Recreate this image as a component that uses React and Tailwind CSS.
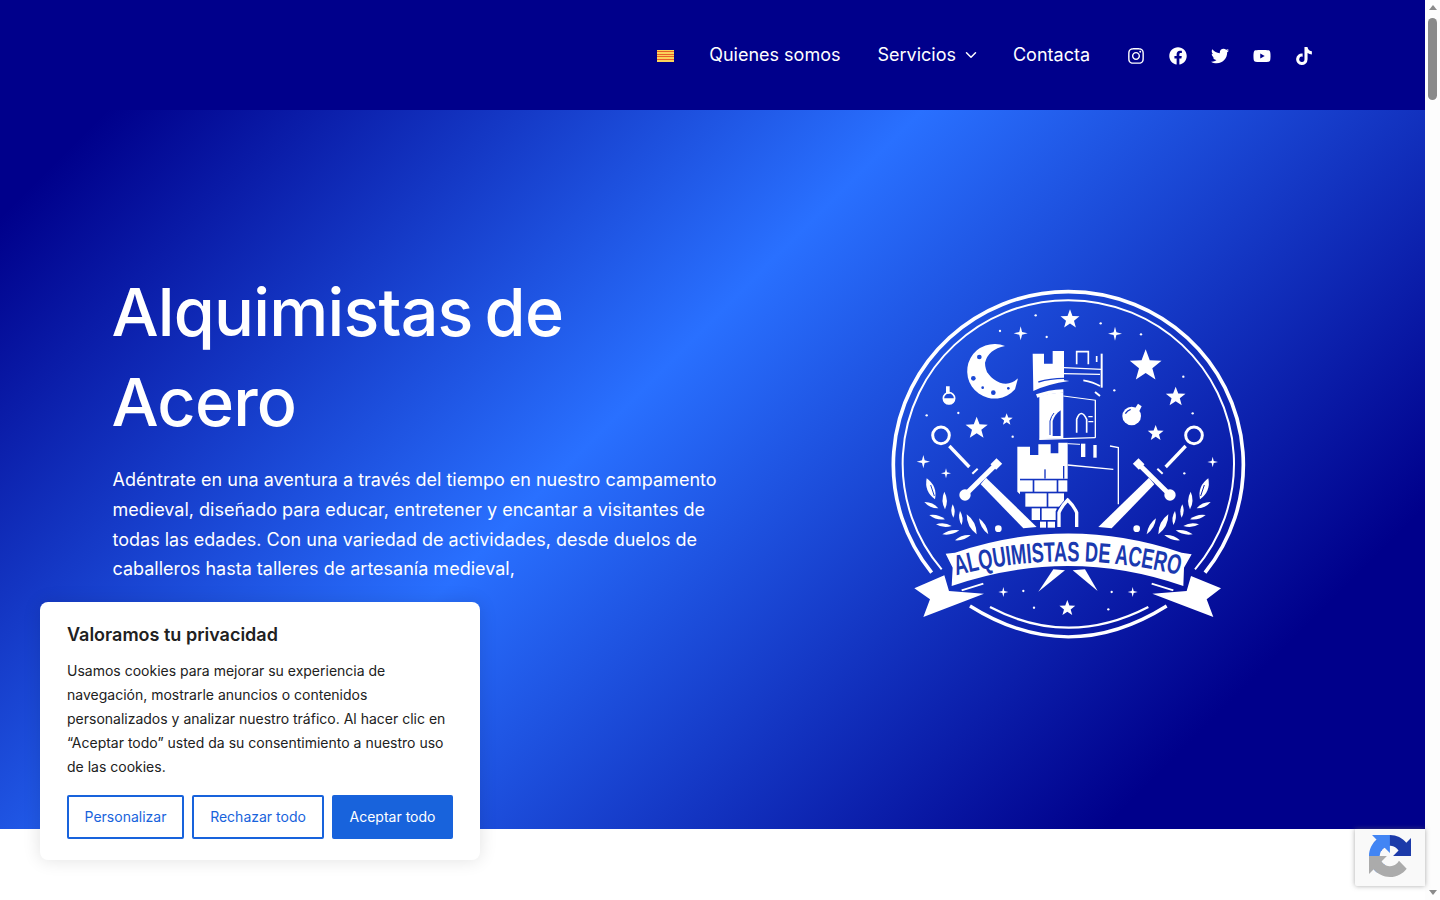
import React from 'react';
import { FaInstagram, FaFacebook, FaTwitter, FaYoutube, FaTiktok } from 'react-icons/fa';
import { FiChevronDown } from 'react-icons/fi';

// Star helpers for the crest
const starPoints = (cx, cy, r) => {
  const pts = [];
  for (let i = 0; i < 10; i++) {
    const rad = i % 2 === 0 ? r : r * 0.42;
    const a = -Math.PI / 2 + (i * Math.PI) / 5;
    pts.push(`${(cx + rad * Math.cos(a)).toFixed(1)},${(cy + rad * Math.sin(a)).toFixed(1)}`);
  }
  return pts.join(' ');
};

const sparklePoints = (cx, cy, r) => {
  const s = r * 0.2;
  return [
    [cx, cy - r], [cx + s, cy - s], [cx + r, cy], [cx + s, cy + s],
    [cx, cy + r], [cx - s, cy + s], [cx - r, cy], [cx - s, cy - s],
  ].map(p => p.join(',')).join(' ');
};

// Leaf drawn from base to tip, bulging both sides
const leafPath = ([x1, y1, x2, y2, w]) => {
  const mx = (x1 + x2) / 2;
  const my = (y1 + y2) / 2;
  const dx = x2 - x1;
  const dy = y2 - y1;
  const len = Math.hypot(dx, dy);
  const nx = (-dy / len) * w;
  const ny = (dx / len) * w;
  return `M${x1} ${y1} Q${mx + nx} ${my + ny} ${x2} ${y2} Q${mx - nx} ${my - ny} ${x1} ${y1}Z`;
};

const STARS = [[570, 115, 30], [797, 255, 50], [887, 348, 31], [290, 442, 35], [380, 416, 19], [827, 457, 25], [562, 982, 25]];
const SPARKLES = [[422, 157, 21], [705, 158, 21], [130, 542, 20], [198, 577, 15], [998, 543, 16], [370, 933, 15], [758, 933, 15]];
const DOTS = [[467, 103], [662, 127], [360, 150], [500, 168], [783, 160], [910, 287], [703, 328], [140, 403], [235, 396], [938, 397], [398, 467], [913, 577], [430, 930], [695, 933], [462, 980], [685, 985]];

// x1, y1, x2, y2, half width
const LEAVES = [
  [165, 655, 140, 592, 22], [195, 685, 193, 632, 13], [220, 710, 218, 670, 10], [245, 732, 240, 690, 10],
  [290, 760, 260, 700, 17], [325, 760, 297, 712, 12], [175, 682, 133, 663, 11], [195, 715, 148, 702, 11],
  [215, 735, 168, 730, 11], [238, 748, 187, 760, 11], [272, 762, 225, 778, 11],
];

const BRICKS = [
  [420, 598, 38, 34], [463, 598, 67, 34], [535, 598, 27, 34],
  [436, 637, 64, 40], [505, 637, 47, 40],
  [455, 682, 25, 35], [485, 682, 45, 35],
  [480, 722, 18, 18], [503, 722, 22, 18],
];

const Side = () => (
  <g>
    {LEAVES.map((l, i) => <path key={i} d={leafPath(l)} fill="#fff" />)}
    <path d="M152 612 L163 645" stroke="#000" strokeWidth="3" fill="none" />
    <circle cx="355" cy="743" r="10" fill="#fff" />
    {/* sword */}
    <polygon points="318,590 470,738 430,742 302,610" fill="#fff" stroke="#000" strokeWidth="8" paintOrder="stroke" />
    <line x1="255" y1="642" x2="350" y2="548" stroke="#fff" strokeWidth="15" />
    <circle cx="255" cy="642" r="17" fill="#fff" />
    <line x1="340" y1="558" x2="358" y2="540" stroke="#fff" strokeWidth="24" />
    <line x1="208" y1="495" x2="268" y2="558" stroke="#fff" strokeWidth="10" />
    <line x1="277" y1="578" x2="293" y2="563" stroke="#fff" strokeWidth="6" />
    <circle cx="183" cy="463" r="25" fill="none" stroke="#fff" strokeWidth="9" />
  </g>
);

const Crest = () => (
  <svg viewBox="0 0 1140 1110" className="w-[380px] h-[370px] block">
    <defs>
      <mask id="crest-mask" maskUnits="userSpaceOnUse" x="0" y="0" width="1140" height="1110">
        {/* rings */}
        <g fill="none" stroke="#fff">
          <path d="M155 875 A525 519 0 1 1 975 875" strokeWidth="11" />
          <path d="M185 865 A497 491 0 1 1 945 865" strokeWidth="6" />
          <path d="M270 975 Q565 1160 860 975" strokeWidth="10" />
          <path d="M330 978 Q565 1102 805 978" strokeWidth="7" />
        </g>

        {STARS.map(([x, y, r], i) => <polygon key={i} points={starPoints(x, y, r)} fill="#fff" />)}
        {SPARKLES.map(([x, y, r], i) => <polygon key={i} points={sparklePoints(x, y, r)} fill="#fff" />)}
        {DOTS.map(([x, y], i) => <circle key={i} cx={x} cy={y} r="3.5" fill="#fff" />)}

        {/* moon */}
        <path d="M375 195 A82 82 0 1 0 405 325 L414 292 Q390 315 360 305 Q315 285 315 245 Q325 205 375 195Z" fill="#fff" />
        {[[298, 228, 7], [280, 292, 7], [340, 335, 7], [325, 270, 5], [385, 322, 4], [308, 320, 4]].map(([x, y, r], i) => (
          <circle key={i} cx={x} cy={y} r={r} fill="#000" />
        ))}

        {/* flasks */}
        <circle cx="207" cy="352" r="17" fill="none" stroke="#fff" strokeWidth="5" />
        <path d="M189 352 H225 A18 18 0 0 1 189 352Z M198 316 H209 V338 H198Z" fill="#fff" />
        <circle cx="755" cy="405" r="28" fill="#fff" />
        <path d="M736 398 Q742 388 752 385" fill="none" stroke="#000" strokeWidth="4" />
        <path d="M762 387 L774 368 L785 376 L776 394Z" fill="#fff" />

        {/* upper tower */}
        <path d="M458 218 H492 V248 H518 V210 H552 V298 L568 300 Q500 310 460 330Z" fill="#fff" />
        <path d="M475 303 Q510 292 552 292" fill="none" stroke="#000" strokeWidth="4" />
        <g fill="none" stroke="#fff">
          <path d="M470 345 Q505 332 550 330" strokeWidth="11" />
          <path d="M552 260 L665 265 M552 278 L660 280" strokeWidth="4" />
          <path d="M665 218 V320" strokeWidth="6" />
          <path d="M590 250 V212 H625 V250" strokeWidth="5" />
          <path d="M650 225 V243" strokeWidth="5" />
          <path d="M610 298 Q640 303 660 315" strokeWidth="5" />
          <path d="M645 333 L660 345" strokeWidth="6" />
        </g>

        {/* mid tower */}
        <path d="M478 345 Q510 335 550 335 V472 L478 475Z" fill="#fff" />
        <path d="M518 465 V420 Q526 398 542 388 V465Z" fill="#000" />
        <path d="M510 462 V420 Q514 405 522 396" fill="none" stroke="#000" strokeWidth="3" />
        <g fill="none" stroke="#fff">
          <path d="M550 345 L648 358" strokeWidth="3" />
          <path d="M646 358 V470" strokeWidth="4" />
          <path d="M478 475 L646 470" strokeWidth="4" />
          <path d="M590 455 V415 Q603 380 620 415 V455" strokeWidth="5" />
          <path d="M625 407 H638 M625 422 H640" strokeWidth="4" />
        </g>

        {/* lower tower */}
        <path d="M412 497 H450 V522 H475 V490 H512 V517 H535 V485 H563 V593 H420 V640 L412 632Z" fill="#fff" />
        <rect x="493" y="565" width="4" height="28" fill="#000" />
        <rect x="549" y="555" width="4" height="38" fill="#000" />
        {BRICKS.map(([x, y, w, h], i) => <rect key={i} x={x} y={y} width={w} height={h} fill="#fff" />)}
        <g fill="none" stroke="#fff">
          <path d="M563 552 L700 565" strokeWidth="4" />
          <path d="M690 495 L715 500 V670" strokeWidth="4" />
          <path d="M563 488 L600 490" strokeWidth="3" />
        </g>
        <path d="M527 745 V690 L563 645 L600 690 V745Z" fill="#000" />
        <path d="M537 738 V695 Q545 675 563 657 Q582 675 590 695 V738" fill="none" stroke="#fff" strokeWidth="10" />
        <rect x="603" y="488" width="13" height="40" fill="#fff" />
        <rect x="640" y="492" width="10" height="38" fill="#fff" />

        <Side />
        <g transform="translate(1125 0) scale(-1 1)"><Side /></g>

        {/* ribbon */}
        <path d="M197 818 L225 815 Q565 700 905 815 L935 820 L912 860 L910 915 Q565 795 215 915 L218 860Z" fill="#fff" />
        <path d="M103 922 L193 883 L207 930 L312 938 L130 1008 L150 955Z" fill="#fff" />
        <path d="M1023 922 L933 885 L920 930 L817 938 L1000 1008 L980 955Z" fill="#fff" />
        <path d="M245 928 L310 908 M880 928 L815 908" fill="none" stroke="#fff" strokeWidth="6" />
        {/* dagger tips below the ribbon */}
        <polygon points="520,865 555,868 475,932" fill="#fff" />
        <polygon points="578,868 615,865 653,930" fill="#fff" />
      </mask>
    </defs>
    <rect width="1140" height="1110" fill="#fff" mask="url(#crest-mask)" />
    <path id="crest-ribbon" d="M225 884 Q565 798 905 884" fill="none" />
    <text
      fill="#1a39b0"
      fontFamily='"Liberation Sans", sans-serif'
      fontWeight="700"
      fontSize="84"
      textLength="675"
      lengthAdjust="spacingAndGlyphs"
    >
      <textPath href="#crest-ribbon" startOffset="4">ALQUIMISTAS DE ACERO</textPath>
    </text>
  </svg>
);

const Senyera = () => (
  <div className="w-[17px] h-[12px] flex flex-col justify-evenly bg-[#fbd35a] mt-[2px]">
    <div className="h-px bg-[#e8622a]" />
    <div className="h-px bg-[#e8622a]" />
    <div className="h-px bg-[#e8622a]" />
    <div className="h-px bg-[#e8622a]" />
  </div>
);

const Header = () => (
  <header className="h-[110px] bg-[#00008b] flex items-center justify-end pr-[112px] text-white">
    <nav className="flex items-center text-[18px] mb-[1px]">
      <Senyera />
      <a className="ml-[35px]">Quienes somos</a>
      <a className="ml-[37px] flex items-center">
        Servicios
        <FiChevronDown className="ml-[6px] w-[18px] h-[18px]" strokeWidth={2} />
      </a>
      <a className="ml-[33px]">Contacta</a>
    </nav>
    <div className="ml-[37px] flex items-center gap-[24px] mt-[2px]">
      <FaInstagram className="w-[18px] h-[18px]" />
      <FaFacebook className="w-[18px] h-[18px]" />
      <FaTwitter className="w-[18px] h-[18px]" />
      <FaYoutube className="w-[18px] h-[18px]" />
      <FaTiktok className="w-[18px] h-[18px]" />
    </div>
  </header>
);

const Hero = () => (
  <section className="h-[719px] flex items-center bg-[linear-gradient(135deg,#00008b_5%,#2970ff_43%,#00008b_85%)] text-white">
    <div className="w-[880px] pl-[112.5px] pb-[88px] shrink-0">
      <h1 className="-ml-[1px] text-[66.5px] leading-[90px] font-medium tracking-[-0.8px] [word-spacing:-5px]">
        Alquimistas de<br />Acero
      </h1>
      <p className="mt-[18px] w-[625px] text-[18px] leading-[29.7px]">
        Adéntrate en una aventura a través del tiempo en nuestro campamento medieval, diseñado para educar, entretener y encantar a visitantes de todas las edades. Con una variedad de actividades, desde duelos de caballeros hasta talleres de artesanía medieval,
      </p>
    </div>
    <div className="mb-[8px]">
      <Crest />
    </div>
  </section>
);

const CookieBanner = () => (
  <div className="absolute left-[40px] top-[602px] w-[440px] h-[258px] bg-white rounded-lg shadow-[0_0_18px_rgba(0,0,0,0.12)] px-[27px] pt-[21px]">
    <h2 className="text-[18px] leading-[24px] font-semibold text-[#212121]">Valoramos tu privacidad</h2>
    <p className="mt-[12px] text-[14px] leading-[24px] text-[#212121]">
      Usamos cookies para mejorar su experiencia de navegación, mostrarle anuncios o contenidos personalizados y analizar nuestro tráfico. Al hacer clic en “Aceptar todo” usted da su consentimiento a nuestro uso de las cookies.
    </p>
    <div className="mt-[16px] flex gap-2 text-[14px]">
      <button className="w-[117px] h-[44px] pb-[2px] border-2 border-[#1863dc] rounded-[2px] text-[#1863dc]">Personalizar</button>
      <button className="w-[132px] h-[44px] pb-[2px] border-2 border-[#1863dc] rounded-[2px] text-[#1863dc]">Rechazar todo</button>
      <button className="w-[121px] h-[44px] pb-[2px] bg-[#1863dc] rounded-[2px] text-white">Aceptar todo</button>
    </div>
  </div>
);

const RecaptchaBadge = () => (
  <div className="absolute left-[1355px] top-[829px] w-[70px] h-[57px] bg-[#f9f9f9] shadow-[0_0_5px_rgba(100,100,100,0.55)] rounded-bl-[2px] flex justify-center pt-[6px]">
    <svg viewBox="0 0 64 64" className="w-[42px] h-[42px]">
      <path d="M64 31.955l-.033-1.37V4.687l-7.16 7.16C50.948 4.674 42.033.093 32.05.093c-10.4 0-19.622 4.96-25.458 12.64l11.736 11.86a15.55 15.55 0 0 1 4.754-5.334c2.05-1.6 4.952-2.906 8.968-2.906.485 0 .86.057 1.135.163 4.976.393 9.288 3.14 11.828 7.124l-8.307 8.307 26.3-.001" fill="#1c3aa9" />
      <path d="M31.862.094l-1.37.033H4.594l7.16 7.16C4.58 13.147 0 22.06 0 32.046c0 10.4 4.96 19.622 12.64 25.458l11.86-11.736a15.55 15.55 0 0 1-5.334-4.754c-1.6-2.05-2.906-4.952-2.906-8.968 0-.485.057-.86.163-1.135.393-4.976 3.14-9.288 7.124-11.828l8.307 8.307-.001-26.3" fill="#4285f4" />
      <path d="M.001 32.045l.033 1.37v25.898l7.16-7.16c5.86 7.173 14.774 11.754 24.76 11.754 10.4 0 19.622-4.96 25.458-12.64l-11.736-11.86a15.55 15.55 0 0 1-4.754 5.334c-2.05 1.6-4.952 2.906-8.968 2.906-.485 0-.86-.057-1.135-.163-4.976-.393-9.288-3.14-11.828-7.124l8.307-8.307-26.3.001" fill="#ababab" />
    </svg>
  </div>
);

const Scrollbar = () => (
  <aside className="w-[15px] h-full bg-[#fdfdfd] flex flex-col items-center shrink-0">
    <div className="mt-[5px] w-0 h-0 border-x-[4px] border-x-transparent border-b-[5px] border-b-[#8a8a8a]" />
    <div className="mt-[8px] w-[9px] h-[82px] rounded-full bg-[#8a8a8a]" />
    <div className="mt-auto mb-[5px] w-0 h-0 border-x-[4px] border-x-transparent border-t-[5px] border-t-[#8a8a8a]" />
  </aside>
);

const App = () => (
  <div className="relative w-[1440px] h-[900px] overflow-hidden flex bg-white font-['Inter',sans-serif]">
    <main className="flex-1 min-w-0">
      <Header />
      <Hero />
    </main>
    <Scrollbar />
    <CookieBanner />
    <RecaptchaBadge />
  </div>
);

export default App;
